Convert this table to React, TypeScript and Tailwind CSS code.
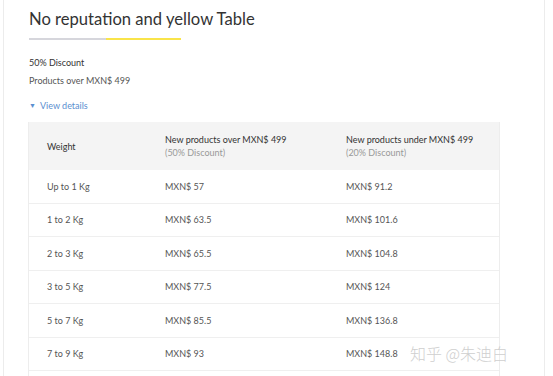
import React from 'react';

const rows = [
  ['Up to 1 Kg', 'MXN$ 57', 'MXN$ 91.2'],
  ['1 to 2 Kg', 'MXN$ 63.5', 'MXN$ 101.6'],
  ['2 to 3 Kg', 'MXN$ 65.5', 'MXN$ 104.8'],
  ['3 to 5 Kg', 'MXN$ 77.5', 'MXN$ 124'],
  ['5 to 7 Kg', 'MXN$ 85.5', 'MXN$ 136.8'],
  ['7 to 9 Kg', 'MXN$ 93', 'MXN$ 148.8'],
];

export default function App() {
  return (
    <div className="relative h-[376px] w-[553px] overflow-hidden bg-white font-['Lato','Open_Sans',sans-serif]">
      <div className="ml-[3px] mr-[8px] h-full border-x border-[#ececec] pl-[25px] pr-[44px] pt-[9px]">
        <h1 className="text-[16.6px] leading-[20px] text-[#333]">No reputation and yellow Table</h1>
        <div className="mt-[9px] flex h-[2px] w-[152px]">
          <div className="w-[77px] bg-[#d6d6dc]" />
          <div className="flex-1 bg-[#f9e44a]" />
        </div>
        <p className="mt-[17px] text-[9px] leading-[11px] text-[#333]">50% Discount</p>
        <p className="mt-[7px] text-[9px] leading-[11px] text-[#555]">Products over MXN$ 499</p>
        <p className="mt-[14px] flex items-center gap-[4px] text-[9px] leading-[11px] text-[#5b8fd0]">
          <span className="text-[7px]">▼</span>
          <span>View details</span>
        </p>
        <div className="-ml-[1px] mt-[11px] border-x border-[#ededed]">
          <div className="grid h-[48px] grid-cols-[136px_181px_1fr] items-center bg-[#f4f4f4] text-[9px] leading-[13px] text-[#333]">
            <div className="pl-[18px]">Weight</div>
            <div>
              <div>New products over MXN$ 499</div>
              <div className="text-[#999]">(50% Discount)</div>
            </div>
            <div>
              <div>New products under MXN$ 499</div>
              <div className="text-[#999]">(20% Discount)</div>
            </div>
          </div>
          {rows.map((r) => (
            <div
              key={r[0]}
              className="grid h-[33.5px] grid-cols-[136px_181px_1fr] items-center border-b border-[#efefef] text-[9px] text-[#555]"
            >
              <div className="pl-[18px]">{r[0]}</div>
              <div>{r[1]}</div>
              <div>{r[2]}</div>
            </div>
          ))}
          <div className="h-[20px]" />
        </div>
      </div>
      <div className="absolute left-[410px] top-[343px] font-['Noto_Sans_CJK_SC',sans-serif] text-[16px] font-light leading-[20px] text-[#cfcfcf]">
        知乎 @朱迪白
      </div>
    </div>
  );
}
